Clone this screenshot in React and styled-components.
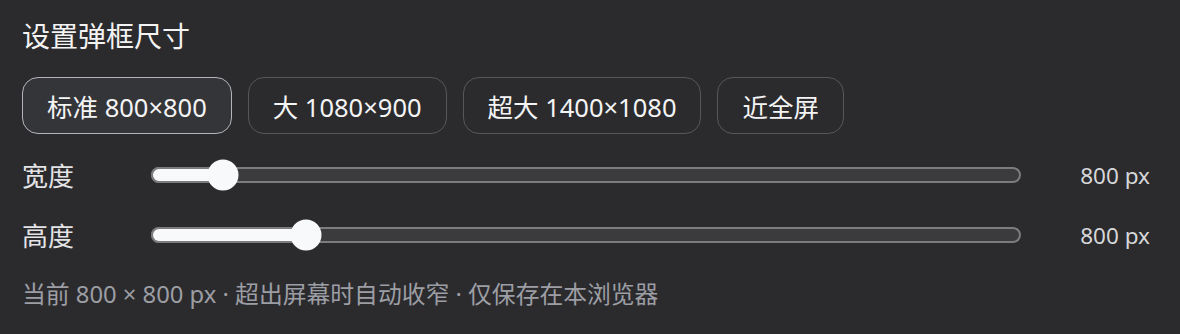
import React from 'react';
import styled, { createGlobalStyle } from "styled-components";

const GlobalStyle = createGlobalStyle`
  html, body {
    margin: 0;
    padding: 0;
    background: #2b2b2e;
  }
  body {
    font-family: "Noto Sans", "Noto Sans CJK SC", sans-serif;
    color: #f2f2f3;
  }
`;

const Panel = styled.div`
  width: 1180px;
  height: 334px;
  box-sizing: border-box;
  padding: 22px 22px 0 22px;
  background: #2b2b2e;
  display: flex;
  flex-direction: column;
`;

const Title = styled.h2`
  margin: 0;
  font-size: 28px;
  line-height: 28px;
  font-weight: 400;
  color: #f3f3f4;
`;

const Presets = styled.div`
  display: flex;
  gap: 16px;
  margin-top: 27px;
`;

const PresetButton = styled.button`
  height: 57px;
  box-sizing: border-box;
  padding: 0 24px;
  border-radius: 16px;
  font-family: inherit;
  font-size: 25.5px;
  color: #f4f4f5;
  background: ${p => (p.$active ? "#343538" : "transparent")};
  border: 1px solid ${p => (p.$active ? "#b3b5ba" : "#56575b")};
  cursor: pointer;
`;

const Rows = styled.div`
  display: flex;
  flex-direction: column;
  gap: 16px;
  margin-top: 19px;
`;

const Row = styled.div`
  display: grid;
  grid-template-columns: 128px 1fr 137px;
  align-items: center;
  height: 44px;
`;

const Label = styled.span`
  font-size: 26px;
  color: #e4e4e6;
`;

const Value = styled.span`
  font-size: 22.5px;
  color: #d6d7d9;
  text-align: right;
  padding-right: 8px;
`;

const Track = styled.div`
  position: relative;
  height: 16px;
  box-sizing: border-box;
  border: 2px solid #7c7c7f;
  border-radius: 8px;
  background: #3b3b3d;
  margin-left: 1px;
`;

const Fill = styled.div`
  position: absolute;
  left: -2px;
  top: -2px;
  bottom: -2px;
  border-radius: 8px;
  background: #f8f9fb;
  border: 2px solid #7c7c7f;
  border-right: none;
  box-sizing: border-box;
`;

const Thumb = styled.div`
  position: absolute;
  top: 50%;
  width: 31px;
  height: 31px;
  border-radius: 50%;
  background: #f8f9fb;
  transform: translate(-50%, -50%);
`;

const Footer = styled.p`
  margin: 22px 0 0;
  font-size: 23.8px;
  line-height: 30px;
  color: #9c9ea4;
`;

const presets = [
  { label: "标准 800×800", active: true },
  { label: "大 1080×900" },
  { label: "超大 1400×1080" },
  { label: "近全屏" },
];

const sliders = [
  { label: "宽度", value: 800, min: 640, max: 3000 },
  { label: "高度", value: 800, min: 600, max: 1800 },
];

function Slider({ value, min, max }) {
  const pct = (value - min) / (max - min);
  const pos = `calc(13px + ${pct} * (100% - 26px))`;
  return (
    <Track>
      <Fill style={{ width: `calc(${pos} + 2px)` }} />
      <Thumb style={{ left: pos }} />
    </Track>
  );
}

export default function App() {
  return (
    <React.Fragment>
      <GlobalStyle />
      <Panel>
        <Title>设置弹框尺寸</Title>
        <Presets>
          {presets.map(p => (
            <PresetButton key={p.label} $active={p.active}>{p.label}</PresetButton>
          ))}
        </Presets>
        <Rows>
          {sliders.map(s => (
            <Row key={s.label}>
              <Label>{s.label}</Label>
              <Slider value={s.value} min={s.min} max={s.max} />
              <Value>{s.value} px</Value>
            </Row>
          ))}
        </Rows>
        <Footer>当前 800 × 800 px · 超出屏幕时自动收窄 · 仅保存在本浏览器</Footer>
      </Panel>
    </React.Fragment>
  );
}
